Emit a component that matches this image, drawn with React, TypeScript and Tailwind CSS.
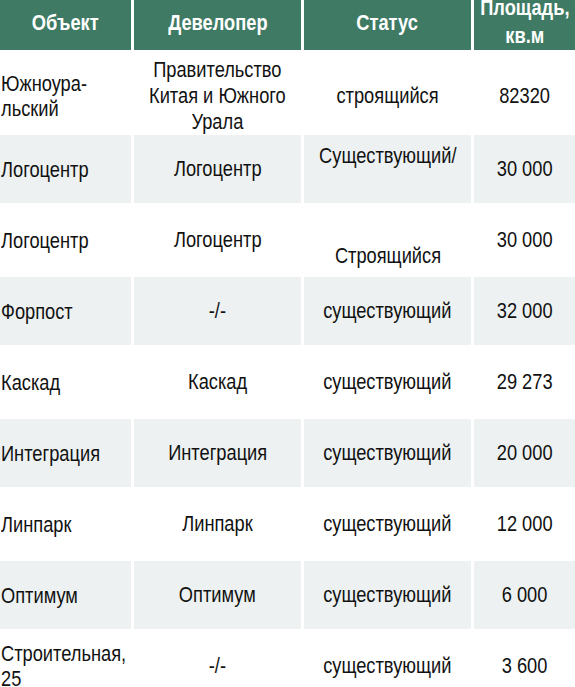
import React from "react";

type Row = {
  obj: React.ReactNode;
  dev: React.ReactNode;
  status: React.ReactNode;
  statusAlign?: "start" | "end" | "center";
  area: string;
  tall?: boolean;
};

const rows: Row[] = [
  {
    obj: (
      <>
        Южноура-
        <br />
        льский
      </>
    ),
    dev: (
      <>
        Правительство
        <br />
        Китая и Южного
        <br />
        Урала
      </>
    ),
    status: "строящийся",
    area: "82320",
    tall: true,
  },
  { obj: "Логоцентр", dev: "Логоцентр", status: "Существующий/", statusAlign: "start", area: "30 000" },
  { obj: "Логоцентр", dev: "Логоцентр", status: "Строящийся", statusAlign: "end", area: "30 000" },
  { obj: "Форпост", dev: "-/-", status: "существующий", area: "32 000" },
  { obj: "Каскад", dev: "Каскад", status: "существующий", area: "29 273" },
  { obj: "Интеграция", dev: "Интеграция", status: "существующий", area: "20 000" },
  { obj: "Линпарк", dev: "Линпарк", status: "существующий", area: "12 000" },
  { obj: "Оптимум", dev: "Оптимум", status: "существующий", area: "6 000" },
  {
    obj: (
      <>
        Строительная,
        <br />
        25
      </>
    ),
    dev: "-/-",
    status: "существующий",
    area: "3 600",
  },
];

const font = {
  fontFamily: '"Liberation Sans", Arial, sans-serif',
};

const headCell =
  "h-[50px] bg-[#3e7a64] text-white font-bold text-[22px] leading-[26px] flex items-center justify-center text-center overflow-hidden";
const narrow = "inline-block whitespace-nowrap scale-x-[0.83]";

export default function App() {
  return (
    <div className="w-[575px] h-[687px] overflow-hidden bg-white" style={font}>
      <div className="grid grid-cols-[131px_167px_167px_101px] gap-[3px]">
        <div className={`${headCell} pb-[4px]`}>
          <span className={narrow}>Объект</span>
        </div>
        <div className={`${headCell} pb-[4px]`}>
          <span className={narrow}>Девелопер</span>
        </div>
        <div className={`${headCell} pb-[4px]`}>
          <span className={narrow}>Статус</span>
        </div>
        <div className={`${headCell} pb-[6px]`}>
          <span className={`${narrow} leading-[28px]`}>
            Площадь,
            <br />
            кв.м
          </span>
        </div>
        {rows.map((r, i) => {
          const bg = i % 2 === 1 ? "bg-[#edf1f1]" : "bg-white";
          const h = r.tall ? "h-[79px] pt-[7px]" : "h-[68px]";
          const statusCls =
            r.statusAlign === "start"
              ? "items-start pt-[8px]"
              : r.statusAlign === "end"
              ? "items-end pb-[5px]"
              : "items-center";
          return (
            <React.Fragment key={i}>
              <div className={`${h} ${bg} flex items-center pl-[0.5px] text-[22px] leading-[25px] text-[#111] overflow-visible`}>
                <span className={`${narrow} origin-left`}>{r.obj}</span>
              </div>
              <div className={`${h} ${bg} flex items-center justify-center text-center text-[22px] leading-[26px] text-[#111]`}>
                <span className={narrow}>{r.dev}</span>
              </div>
              <div className={`${h} ${bg} flex ${statusCls} justify-center text-center text-[22px] leading-[26px] text-[#111]`}>
                <span className={narrow}>{r.status}</span>
              </div>
              <div className={`${h} ${bg} flex items-center justify-center text-center text-[22px] leading-[26px] text-[#111]`}>
                <span className={narrow}>{r.area}</span>
              </div>
            </React.Fragment>
          );
        })}
      </div>
    </div>
  );
}
